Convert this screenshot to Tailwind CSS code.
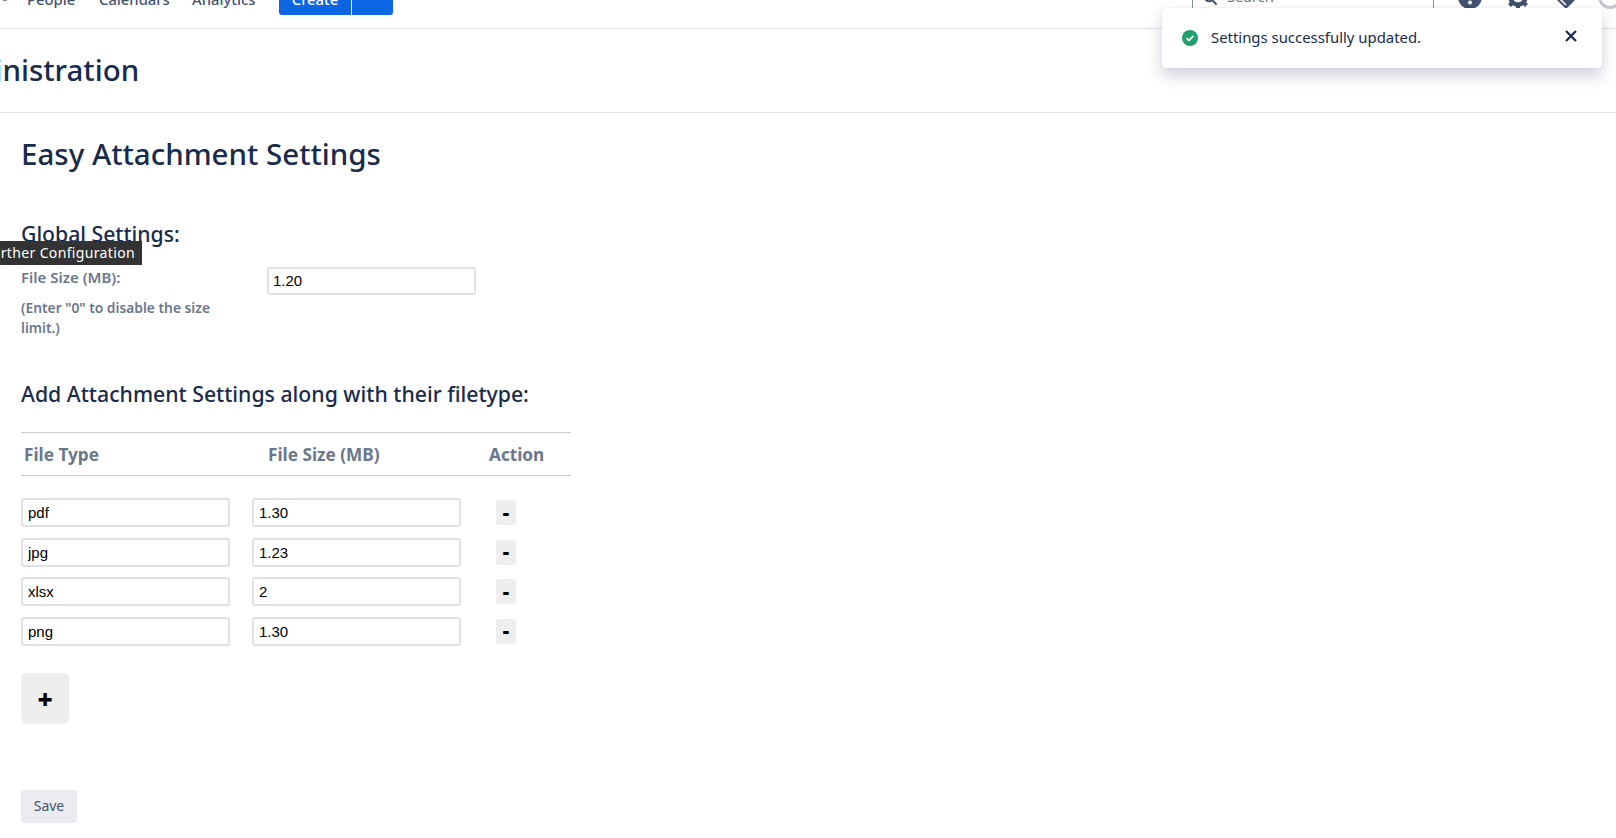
<!DOCTYPE html>
<html>
<head>
<meta charset="utf-8">
<script src="https://cdn.jsdelivr.net/npm/@tailwindcss/browser@4"></script>
</head>
<body class="bg-white font-['Noto_Sans',sans-serif] text-[#172b4d] overflow-hidden">
<div class="relative h-[838px] w-[1616px] overflow-hidden">
  <header class="relative h-[29px] border-b border-[#dfe1e6] flex items-end justify-between overflow-hidden">
    <span class="absolute left-[3px] top-0 w-[4px] h-px bg-[#42526e]/70"></span>
    <nav class="flex items-end h-[28px] text-[14.8px] text-[#42526e] font-medium whitespace-nowrap">
      <span class="ml-[27px] mb-[19px] w-[48px] leading-[20px]">People</span>
      <span class="ml-[24px] mb-[19px] w-[71px] leading-[20px]">Calendars</span>
      <span class="ml-[22px] mb-[19px] w-[65px] leading-[20px]">Analytics</span>
      <div class="ml-[22px] mb-[13px] flex h-[32px] gap-px">
        <span class="w-[72px] bg-[#0c66e4] text-white rounded-l-[3px] text-center leading-[20px] pt-[6px]">Create</span>
        <span class="w-[41px] bg-[#0c66e4] rounded-r-[3px]"></span>
      </div>
    </nav>
    <div class="flex items-start h-[28px] mr-[-6px]">
      <div class="w-[242px] h-[28px] border-x border-[#8993a4] pl-[10px] flex items-start text-[14.8px] text-[#6b778c]">
        <svg class="mt-[-9px] shrink-0" width="15" height="15" viewBox="0 0 16 16" fill="none" stroke="#42526e" stroke-width="2.2"><circle cx="6.5" cy="6.5" r="4.5"/><path d="M10 10l4.5 4.5"/></svg>
        <span class="ml-[9px] mt-[-15px]">Search</span>
      </div>
      <svg class="ml-[24px] mt-[-15px] shrink-0" width="24" height="24" viewBox="0 0 24 24"><circle cx="12" cy="12" r="12" fill="#42526e"/><circle cx="12" cy="17.5" r="2" fill="#fff"/></svg>
      <svg class="ml-[24px] mt-[-15px] shrink-0" width="24" height="24" viewBox="0 0 24 24" fill="none"><circle cx="12" cy="12" r="7.5" stroke="#42526e" stroke-width="4.5"/><path d="M12 0v4M12 20v4M0 12h4M20 12h4M3.5 3.5l3 3M17.5 17.5l3 3M20.5 3.5l-3 3M6.5 17.5l-3 3" stroke="#42526e" stroke-width="4"/></svg>
      <svg class="ml-[26px] mt-[-15px] shrink-0" width="20" height="24" viewBox="0 0 20 24"><path d="M0 14h20l-10 10z" fill="#42526e"/><path d="M4 14l6 6" fill="none" stroke="#fff" stroke-width="1.5"/></svg>
      <span class="ml-[22px] mt-[-15px] w-[24px] h-[24px] shrink-0 rounded-full border-[3px] border-[#c1c7d0]"></span>
    </div>
  </header>
  <div class="h-[84px] border-b border-[#dfe1e6] flex items-center overflow-hidden">
    <h1 class="ml-[-71px] text-[29.5px] leading-[40px] font-medium text-[#172b4d] mt-[-2px] whitespace-nowrap">Administration</h1>
  </div>
  <main class="pl-[21px]">
    <h2 class="mt-[23px] text-[29.5px] leading-[36px] font-medium">Easy Attachment Settings</h2>
    <h3 class="mt-[48px] text-[21.2px] leading-[28px] font-medium">Global Settings:</h3>
    <div class="flex mt-[19px]">
      <div class="w-[197px] mr-[49px] text-[13.8px] font-semibold text-[#6b778c] leading-[20px]">
        <p class="text-[15px]">File Size (MB):</p>
        <p class="mt-[11px]">(Enter "0" to disable the size limit.)</p>
      </div>
      <input class="w-[209px] h-[28px] border-2 border-[#dfe1e6] rounded-[3px] pl-[4px] pr-[5px] pb-[2px] text-[15px] text-black font-['Liberation_Sans',sans-serif]" value="1.20">
    </div>
    <h3 class="mt-[42px] text-[21.25px] leading-[28px] font-medium">Add Attachment Settings along with their filetype:</h3>
    <div class="mt-[24px] w-[550px]">
      <div class="h-[44px] border-y border-[#cccccc] flex items-center pt-[2px] text-[17.2px] font-bold text-[#6b778c]">
        <span class="w-[247px] pl-[3px]">File Type</span>
        <span class="w-[221px]">File Size (MB)</span>
        <span>Action</span>
      </div>
      <div class="mt-[22px] flex flex-col gap-[10.5px]">
        <div class="flex items-center h-[29px]"><input class="w-[209px] h-[29px] border-2 border-[#dfe1e6] rounded-[3px] px-[5px] text-[15px] text-black font-['Liberation_Sans',sans-serif]" value="pdf"><input class="ml-[22px] w-[209px] h-[29px] border-2 border-[#dfe1e6] rounded-[3px] px-[5px] text-[15px] text-black font-['Liberation_Sans',sans-serif]" value="1.30"><button class="ml-[35px] w-[20px] h-[25px] bg-[#eeeeee] rounded-[3px] text-[20px] font-black text-black leading-none">-</button></div>
        <div class="flex items-center h-[29px]"><input class="w-[209px] h-[29px] border-2 border-[#dfe1e6] rounded-[3px] px-[5px] text-[15px] text-black font-['Liberation_Sans',sans-serif]" value="jpg"><input class="ml-[22px] w-[209px] h-[29px] border-2 border-[#dfe1e6] rounded-[3px] px-[5px] text-[15px] text-black font-['Liberation_Sans',sans-serif]" value="1.23"><button class="ml-[35px] w-[20px] h-[25px] bg-[#eeeeee] rounded-[3px] text-[20px] font-black text-black leading-none">-</button></div>
        <div class="flex items-center h-[29px]"><input class="w-[209px] h-[29px] border-2 border-[#dfe1e6] rounded-[3px] px-[5px] text-[15px] text-black font-['Liberation_Sans',sans-serif]" value="xlsx"><input class="ml-[22px] w-[209px] h-[29px] border-2 border-[#dfe1e6] rounded-[3px] px-[5px] text-[15px] text-black font-['Liberation_Sans',sans-serif]" value="2"><button class="ml-[35px] w-[20px] h-[25px] bg-[#eeeeee] rounded-[3px] text-[20px] font-black text-black leading-none">-</button></div>
        <div class="flex items-center h-[29px]"><input class="w-[209px] h-[29px] border-2 border-[#dfe1e6] rounded-[3px] px-[5px] text-[15px] text-black font-['Liberation_Sans',sans-serif]" value="png"><input class="ml-[22px] w-[209px] h-[29px] border-2 border-[#dfe1e6] rounded-[3px] px-[5px] text-[15px] text-black font-['Liberation_Sans',sans-serif]" value="1.30"><button class="ml-[35px] w-[20px] h-[25px] bg-[#eeeeee] rounded-[3px] text-[20px] font-black text-black leading-none">-</button></div>
      </div>
    </div>
    <button class="block mt-[27.5px] w-[48px] h-[51px] bg-[#eeeeee] rounded-[5px] text-[26px] font-black text-black leading-none">+</button>
    <button class="block mt-[66px] w-[56px] h-[33px] pb-[2px] bg-[#ebecf0] rounded-[3px] text-[14px] text-[#42526e]">Save</button>
  </main>
  <div class="absolute left-0 top-[241px] h-[24px] w-[142px] bg-[#333333] text-white text-[14px] tracking-[0.35px] leading-[24px] pr-[7px] flex justify-end whitespace-nowrap overflow-hidden">Further Configuration</div>
  <div class="absolute left-[1162px] top-[8px] w-[440px] h-[60px] bg-white rounded-[3px] shadow-[0_8px_16px_rgba(9,30,66,0.2),0_0_1px_rgba(9,30,66,0.25)] flex items-center pl-[20px]">
    <svg width="16" height="16" viewBox="0 0 16 16"><circle cx="8" cy="8" r="8" fill="#22a06b"/><path d="M4.6 8.2l2.4 2.3 4.4-4.6" fill="none" stroke="#fff" stroke-width="1.8"/></svg>
    <span class="ml-[13px] text-[14.9px] text-[#172b4d] mt-[-2px]">Settings successfully updated.</span>
    <svg class="absolute left-[402px] top-[21px]" width="14" height="14" viewBox="0 0 14 14" fill="none" stroke="#172b4d" stroke-width="2.2"><path d="M2 2l10 10M12 2L2 12"/></svg>
  </div>
</div>
</body>
</html>
